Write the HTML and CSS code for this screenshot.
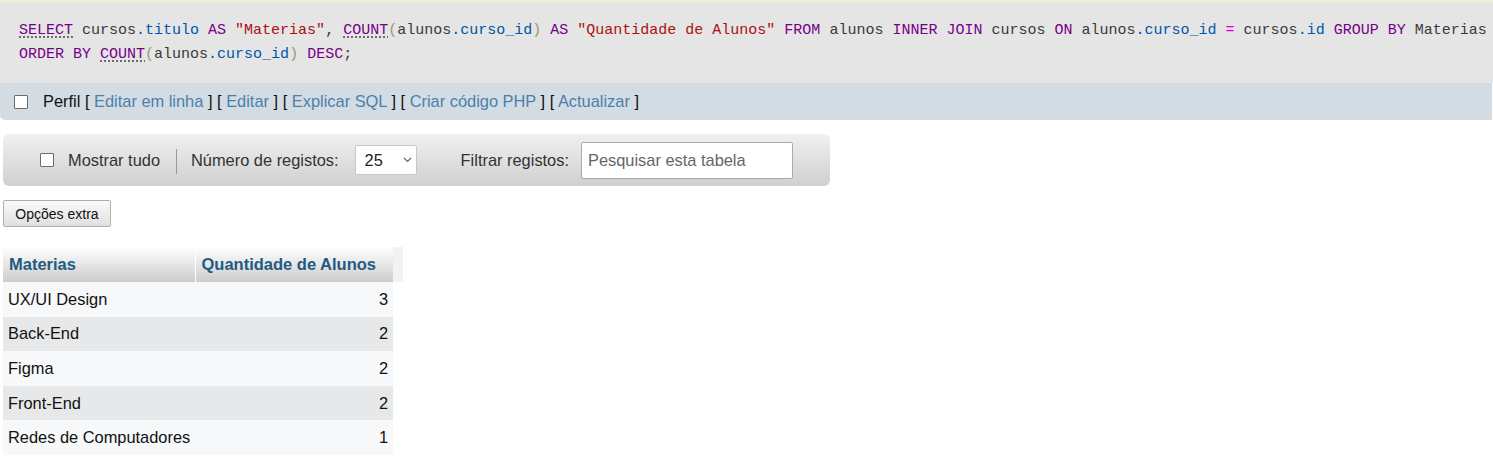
FILE: index.html
```html
<!DOCTYPE html>
<html lang="pt">
<head>
<meta charset="utf-8">
<title>SQL</title>
<link rel="stylesheet" href="styles.css">
</head>
<body>
<div class="sqlbox">
<div class="code"><span class="kw doc">SELECT</span> <span class="tx">cursos</span><span class="col">.titulo</span> <span class="kw">AS</span> <span class="str">"Materias"</span><span class="tx">,</span> <span class="fn doc">COUNT</span><span class="br">(</span><span class="tx">alunos</span><span class="col">.curso_id</span><span class="br">)</span> <span class="kw">AS</span> <span class="str">"Quantidade de Alunos"</span> <span class="kw">FROM</span> <span class="tx">alunos</span> <span class="kw">INNER</span> <span class="kw">JOIN</span> <span class="tx">cursos</span> <span class="kw">ON</span> <span class="tx">alunos</span><span class="col">.curso_id</span> <span class="op">=</span> <span class="tx">cursos</span><span class="col">.id</span> <span class="kw">GROUP</span> <span class="kw">BY</span> <span class="tx">Materias</span>
<span class="kw">ORDER</span> <span class="kw">BY</span> <span class="fn doc">COUNT</span><span class="br">(</span><span class="tx">alunos</span><span class="col">.curso_id</span><span class="br">)</span> <span class="kw">DESC</span><span class="tx">;</span></div>
</div>
<div class="navbar">
  <span class="cb"></span>
  <span class="navtext">Perfil <span class="brk">[</span> <a>Editar em linha</a> <span class="brk">]</span> <span class="brk">[</span> <a>Editar</a> <span class="brk">]</span> <span class="brk">[</span> <a>Explicar SQL</a> <span class="brk">]</span> <span class="brk">[</span> <a>Criar código PHP</a> <span class="brk">]</span> <span class="brk">[</span> <a>Actualizar</a> <span class="brk">]</span></span>
</div>
<div class="content">
  <div class="toolbar">
    <span class="cb"></span>
    <span class="lbl show">Mostrar tudo</span>
    <span class="sep"></span>
    <span class="lbl">Número de registos:</span>
    <span class="select">25<svg class="chev" width="9" height="6" viewBox="0 0 9 6"><path d="M1 1 L4.5 4.5 L8 1" fill="none" stroke="#666" stroke-width="1.2"/></svg></span>
    <span class="lbl filt">Filtrar registos:</span>
    <span class="input">Pesquisar esta tabela</span>
  </div>
  <div class="btnrow"><span class="btn">Opções extra</span></div>
  <table class="data">
    <thead>
      <tr><th class="c1">Materias</th><th class="c2">Quantidade de Alunos</th><th class="c3"></th></tr>
    </thead>
    <tbody>
      <tr class="odd"><td>UX/UI Design</td><td class="num">3</td></tr>
      <tr class="even"><td>Back-End</td><td class="num">2</td></tr>
      <tr class="odd"><td>Figma</td><td class="num">2</td></tr>
      <tr class="even"><td>Front-End</td><td class="num">2</td></tr>
      <tr class="odd"><td>Redes de Computadores</td><td class="num">1</td></tr>
    </tbody>
  </table>
</div>
</body>
</html>
```
FILE: styles.css
```css
html, body {
  margin: 0;
  padding: 0;
  background: #fff;
  font-family: "Liberation Sans", Arial, sans-serif;
  color: #000;
}
.sqlbox {
  border-top: 2px solid #eef0d2;
  background: #e5e5e5;
  padding: 17px 0 16px 19px;
  height: 48px;
  white-space: nowrap;
  overflow: hidden;
}
.code {
  font-family: "Liberation Mono", "DejaVu Sans Mono", monospace;
  font-size: 15px;
  line-height: 24px;
  white-space: pre;
  color: #444;
}
.kw { color: #770088; }
.fn { color: #770088; }
.doc { text-decoration: underline dotted #444; text-underline-offset: 3px; }
.str { color: #aa1111; }
.col { color: #0055aa; }
.tx { color: #3a3a3a; }
.br { color: #999977; }
.op { color: #dd00dd; }
.navbar {
  background: #d3dce3;
  height: 37px;
  display: flex;
  align-items: center;
  padding-left: 14px;
  border-bottom-left-radius: 5px;
  margin-right: 1px;
}
.navtext {
  font-size: 16.4px;
  margin-left: 15px;
  color: #111;
}
.navtext a { color: #4b80ad; }
.brk { color: #111; }
.cb {
  display: inline-block;
  width: 12px;
  height: 12px;
  border: 1px solid #6b6b6b;
  background: #fff;
  border-radius: 1px;
  flex: none;
}
.content {
  padding: 14px 0 0 3px;
}
.toolbar {
  width: 827px;
  height: 52px;
  box-sizing: border-box;
  border-radius: 6px;
  background: linear-gradient(#f0f0f0, #d0d0d0);
  display: flex;
  align-items: center;
  padding-left: 37px;
  font-size: 16.4px;
}
.lbl { color: #333; }
.show { margin-left: 14px; }
.sep {
  width: 1px;
  height: 25px;
  background: #9a9a9a;
  margin: 3px 14px 0 16px;
}
.select {
  margin-left: 16px;
  width: 62px;
  height: 30px;
  box-sizing: border-box;
  background: #fff;
  border: 1px solid #c8c8c8;
  border-radius: 2px;
  display: flex;
  align-items: center;
  padding-left: 9px;
  color: #222;
}
.chev { margin-left: auto; margin-right: 4px; }
.filt { margin-left: 44px; }
.input {
  margin-left: 12px;
  width: 212px;
  height: 37px;
  box-sizing: border-box;
  background: #fff;
  border: 1px solid #aaa;
  border-radius: 2px;
  display: flex;
  align-items: center;
  padding-left: 6px;
  color: #666;
}
.btnrow {
  padding-top: 14px;
}
.btn {
  display: inline-flex;
  align-items: center;
  height: 27px;
  box-sizing: border-box;
  width: 108px;
  justify-content: center;
  border: 1px solid #b0b0b0;
  border-radius: 2px;
  background: linear-gradient(#fafafa, #e0e0e0);
  font-size: 14px;
  color: #111;
}
.data {
  margin-top: 20px;
  border-collapse: collapse;
  table-layout: fixed;
  width: 400px;
  font-size: 16.4px;
}
.data th {
  height: 35px;
  padding: 0 0 0 6px;
  text-align: left;
  background: linear-gradient(#ffffff, #cccccc);
  color: #235a81;
  font-size: 16.5px;
  font-weight: bold;
  box-sizing: border-box;
  white-space: nowrap;
}
.data th.c1 { width: 192px; border-right: 1px solid #fff; }
.data th.c2 { width: 198px; }
.data th.c3 { width: 10px; padding: 0; background: #f2f2f2; }
.data td {
  height: 34.6px;
  padding: 0 5px 0 5px;
  color: #111;
  white-space: nowrap;
}
.data td.num { text-align: right; }
.odd td { background: #f7f8f9; }
.even td { background: #e7e8e9; }
```
